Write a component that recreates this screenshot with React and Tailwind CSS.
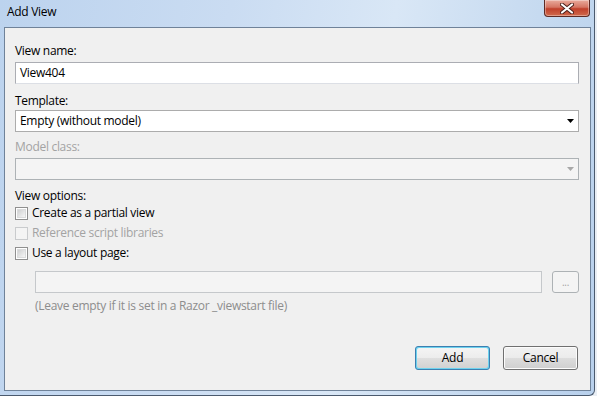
import React from 'react';

const font = { fontFamily: '"Segoe UI", "Open Sans", "Noto Sans", sans-serif' };

function Arrow({ disabled }) {
    return (
        <svg width="7" height="4" viewBox="0 0 7 4" className="shrink-0">
            <path d="M0 0h7L3.5 4z" fill={disabled ? '#a8a8a8' : '#000'} />
        </svg>
    );
}

function CheckBox({ label, disabled }) {
    return (
        <div className="flex items-center h-[16px]">
            <span
                className={
                    disabled
                        ? 'w-[13px] h-[13px] border border-[#c9cbcd] bg-[#f4f4f4]'
                        : 'w-[13px] h-[13px] border border-[#8f8f8f] p-[1px] bg-white'
                }
            >
                {!disabled && (
                    <span className="block w-full h-full border border-[#dadbdc] bg-[linear-gradient(135deg,#cfd0d1,#f6f6f6)]" />
                )}
            </span>
            <span className={disabled ? 'ml-[4px] text-[#a3a3a3]' : 'ml-[4px] text-black'}>{label}</span>
        </div>
    );
}

export default function App() {
    return (
        <div className="w-[597px] h-[396px] bg-[#e9eef4] overflow-hidden text-[12px] leading-[16px] tracking-[-0.3px]" style={font}>
            <div className="w-[595px] h-[396px] flex flex-col pl-[4px] pr-[3px] pb-[4px] border-r border-b border-[#4b5a6e] rounded-br-[6px] bg-[linear-gradient(100deg,#bcd3ee_0%,#cadcf2_35%,#d9e7f6_60%,#c3d8ef_85%,#b8d0ec_100%)]">
                {/* title bar */}
                <div className="h-[27px] flex items-start shrink-0">
                    <div className="pt-[4px] pl-[3px] text-black">Add View</div>
                    <div className="ml-auto mr-[1px] w-[46px] h-[17px] flex items-center justify-center rounded-b-[4px] border border-t-0 border-[#5d2a24] bg-[linear-gradient(to_bottom,#e9ab9d,#d57563_45%,#c0402b_55%,#d06a4c)] shadow-[inset_0_0_0_1px_rgba(255,255,255,0.35)]">
                        <svg width="14" height="11" viewBox="0 0 14 11">
                            <path d="M2 1.5l10 8M12 1.5l-10 8" stroke="#4a1f1a" strokeWidth="4" strokeLinecap="round" />
                            <path d="M2 1.5l10 8M12 1.5l-10 8" stroke="#fff" strokeWidth="2.2" strokeLinecap="round" />
                        </svg>
                    </div>
                </div>

                {/* client area */}
                <div className="flex-1 border border-[#6f8299] bg-[#f0f0f0] flex flex-col pl-[10px] pr-[11px] pt-[15px]">
                    <div>View name:</div>
                    <div className="mt-[3px] h-[22px] flex items-center px-[4px] bg-white border border-[#abadb3] border-b-[#dcdfe5]">
                        View404
                    </div>

                    <div className="mt-[9px]">Template:</div>
                    <div className="mt-[1px] h-[22px] flex items-center justify-between pl-[4px] pr-[4px] bg-white border border-[#acacac]">
                        <span>Empty (without model)</span>
                        <Arrow />
                    </div>

                    <div className="mt-[7px] text-[#a3a3a3]">Model class:</div>
                    <div className="mt-[3px] h-[22px] flex items-center justify-end pr-[4px] bg-[#f4f4f4] border border-[#adb2b5]">
                        <Arrow disabled />
                    </div>

                    <div className="mt-[8px]">View options:</div>
                    <div className="mt-[1px]">
                        <CheckBox label="Create as a partial view" />
                    </div>
                    <div className="mt-[4px]">
                        <CheckBox label="Reference script libraries" disabled />
                    </div>
                    <div className="mt-[4px]">
                        <CheckBox label="Use a layout page:" />
                    </div>

                    <div className="mt-[10px] ml-[20px] flex gap-[10px]">
                        <div className="flex-1 h-[22px] bg-[#f4f4f4] border border-[#c5c8cb]" />
                        <div className="w-[27px] h-[22px] flex items-center justify-center rounded-[3px] bg-[#f4f4f4] border border-[#adb2b5] text-[#a3a3a3] text-[10px]">
                            ...
                        </div>
                    </div>
                    <div className="mt-[5px] ml-[20px] text-[#8d8d8d]">
                        (Leave empty if it is set in a Razor _viewstart file)
                    </div>

                    <div className="mt-[32px] mr-[1px] flex justify-end gap-[13px]">
                        <div className="w-[75px] h-[24px] rounded-[3px] border border-[#3c7fb1] p-[1px] bg-[#6ed2ee]">
                            <div className="w-full h-full rounded-[2px] flex items-center justify-center bg-[linear-gradient(to_bottom,#f4f4f4,#ececec_50%,#dfdfdf_50%,#d2d2d2)] text-black">
                                Add
                            </div>
                        </div>
                        <div className="w-[75px] h-[24px] rounded-[3px] border border-[#707070] flex items-center justify-center bg-[linear-gradient(to_bottom,#f2f2f2,#ebebeb_50%,#dddddd_50%,#cfcfcf)] shadow-[inset_0_0_0_1px_#fcfcfc] text-black">
                            Cancel
                        </div>
                    </div>
                </div>
            </div>
        </div>
    );
}
